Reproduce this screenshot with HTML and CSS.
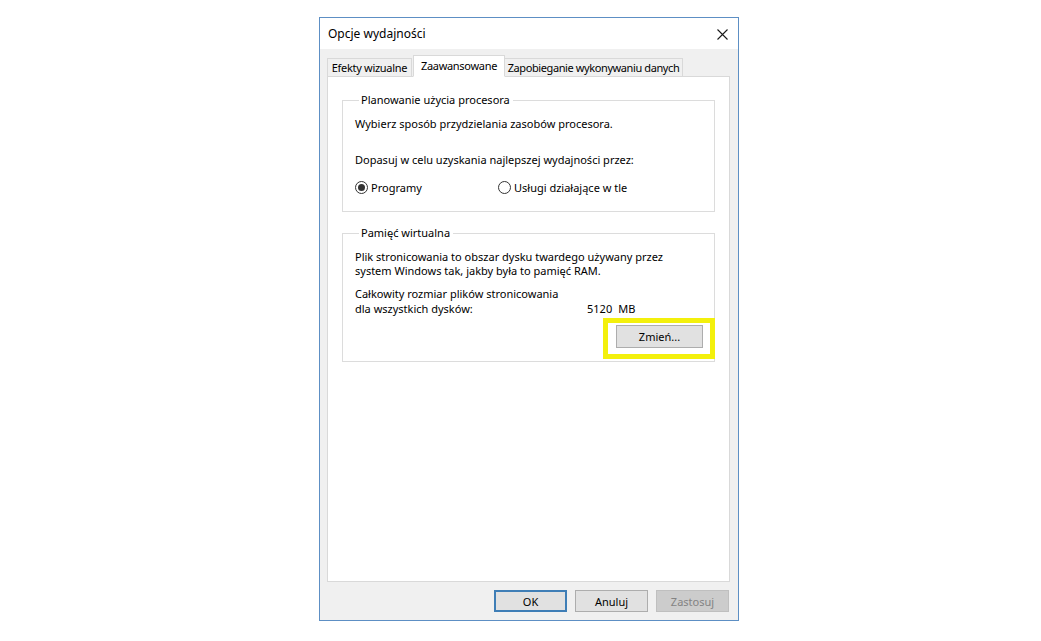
FILE: index.html
```html
<!DOCTYPE html>
<html lang="pl">
<head>
<meta charset="utf-8">
<title>Opcje wydajności</title>
<link rel="stylesheet" href="styles.css">
</head>
<body>
<div class="window">
  <div class="titlebar">
    <span class="title">Opcje wydajności</span>
    <span class="close">
      <svg width="11" height="11" viewBox="0 0 11 11"><path d="M0.5 0.5 L10.5 10.5 M10.5 0.5 L0.5 10.5" stroke="#1a1a1a" stroke-width="1.1" fill="none"/></svg>
    </span>
  </div>
  <div class="body">
    <div class="tabs">
      <div class="tab tab-1">Efekty wizualne</div>
      <div class="tab tab-2 active">Zaawansowane</div>
      <div class="tab tab-3">Zapobieganie wykonywaniu danych</div>
    </div>
    <div class="panel">
      <fieldset class="group group-cpu">
        <legend>Planowanie użycia procesora</legend>
        <p class="line first">Wybierz sposób przydzielania zasobów procesora.</p>
        <p class="line adjust">Dopasuj w celu uzyskania najlepszej wydajności przez:</p>
        <div class="radios">
          <label class="radio radio-first"><span class="dot checked"></span>Programy</label>
          <label class="radio"><span class="dot"></span>Usługi działające w tle</label>
        </div>
      </fieldset>
      <fieldset class="group group-mem">
        <legend>Pamięć wirtualna</legend>
        <p class="para para-1">Plik stronicowania to obszar dysku twardego używany przez<br>system Windows tak, jakby była to pamięć RAM.</p>
        <div class="size">
          <div class="size-label">Całkowity rozmiar plików stronicowania<br>dla wszystkich dysków:</div>
          <div class="size-value"><span>5120</span><span class="unit">MB</span></div>
        </div>
        <div class="change-row">
          <div class="highlight">
            <button class="btn btn-change">Zmień...</button>
          </div>
        </div>
      </fieldset>
    </div>
    <div class="buttons">
      <button class="btn btn-ok">OK</button>
      <button class="btn">Anuluj</button>
      <button class="btn btn-disabled">Zastosuj</button>
    </div>
  </div>
</div>
</body>
</html>
```

FILE: styles.css
```css
* { box-sizing: border-box; }
html, body {
  margin: 0;
  padding: 0;
  background: #ffffff;
}
body {
  width: 1041px;
  height: 641px;
  overflow: hidden;
  font-family: "Noto Sans", "Liberation Sans", sans-serif;
  font-size: 11px;
  color: #000;
}
.window {
  margin: 17px 0 0 319px;
  width: 420px;
  border: 1px solid #5d8fc4;
  background: #f0f0f0;
}
.titlebar {
  height: 31px;
  background: #ffffff;
  display: flex;
  align-items: center;
  justify-content: space-between;
  padding: 0 10px 0 8px;
}
.title {
  font-size: 12px;
  color: #000;
}
.close {
  display: flex;
  width: 11px;
  height: 11px;
  margin-top: 1px;
}
.body {
  padding: 6px 8px 8px 7px;
}
.tabs {
  display: flex;
  align-items: flex-end;
  height: 22px;
  margin-bottom: -1px;
  position: relative;
  z-index: 1;
}
.tab {
  height: 19px;
  border: 1px solid #d9d9d9;
  background: #f0f0f0;
  display: flex;
  align-items: center;
  justify-content: center;
  white-space: nowrap;
  padding-bottom: 1px;
  letter-spacing: -0.3px;
}
.tab-1 { width: 85px; }
.tab-2 { width: 92px; margin-left: 1px; }
.tab-3 { width: 179px; margin-left: -1px; letter-spacing: -0.4px; }
.tab.active {
  height: 22px;
  background: #ffffff;
  border-bottom-color: #ffffff;
  padding-bottom: 2px;
  position: relative;
  z-index: 2;
}
.panel {
  height: 506px;
  border: 1px solid #d9d9d9;
  background: #ffffff;
  padding: 15px 14px 0 14px;
}
.group {
  margin: 0;
  border: 1px solid #dcdcdc;
  padding: 0 12px;
  min-width: 0;
}
.group legend {
  padding: 0 3px 0 2px;
  margin-left: 4px;
  line-height: 16px;
}
.line {
  margin: 0;
  line-height: 15px;
}
.line.first { margin-top: 8px; }
.line.adjust { margin-top: 21px; }
.radios {
  display: flex;
  align-items: center;
  height: 16px;
  margin-top: 12px;
  margin-bottom: 16px;
}
.radio {
  display: flex;
  align-items: center;
  gap: 3px;
  white-space: nowrap;
}
.radio-first { width: 143px; }
.dot {
  width: 13px;
  height: 13px;
  border: 1px solid #333333;
  border-radius: 50%;
  background: #fff;
  display: flex;
  align-items: center;
  justify-content: center;
}
.dot.checked::after {
  content: "";
  width: 7px;
  height: 7px;
  border-radius: 50%;
  background: #333333;
}
.group-mem {
  margin-top: 13px;
}
.para {
  margin: 9px 0 0;
  line-height: 14px;
}
.size {
  display: grid;
  grid-template-columns: 232px auto;
  align-items: end;
  margin-top: 8px;
  line-height: 15px;
}
.size-value {
  display: flex;
  gap: 6px;
}
.change-row {
  display: flex;
  justify-content: flex-end;
  margin-top: 9px;
  padding-bottom: 13px;
}
.highlight {
  position: relative;
  display: flex;
  margin-right: -1px;
}
.highlight::after {
  content: "";
  position: absolute;
  left: -13px;
  right: -12px;
  top: -7px;
  bottom: -11px;
  border: 5px solid #f3f00c;
  pointer-events: none;
}
.btn {
  font-family: inherit;
  font-size: 11px;
  color: #000;
  width: 73px;
  height: 22px;
  border: 1px solid #adadad;
  background: #e1e1e1;
  padding: 0;
  margin: 0;
}
.btn-change {
  width: 87px;
  height: 23px;
}
.buttons {
  display: flex;
  justify-content: flex-end;
  gap: 8px;
  margin-top: 8px;
  padding-right: 1px;
}
.btn-ok {
  border: 2px solid #3f7eb6;
}
.btn-disabled {
  background: #cccccc;
  border-color: #bfbfbf;
  color: #838383;
}
```
